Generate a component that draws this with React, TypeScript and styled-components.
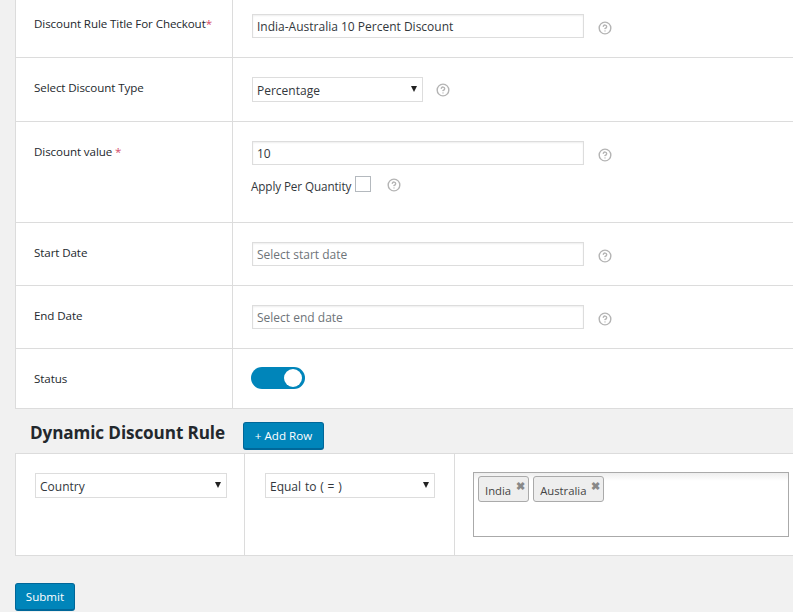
import React from "react";
import styled, { createGlobalStyle } from "styled-components";
import { CircleHelp } from "lucide-react";

const Global = createGlobalStyle`
  html, body { margin: 0; padding: 0; background: #f1f1f1; overflow: hidden; }
  body { font-family: "Open Sans", "Noto Sans", sans-serif; color: #32373c; -webkit-font-smoothing: antialiased; }
  * { box-sizing: border-box; }
`;
const Page = styled.div`
  width: 793px;
  height: 612px;
  padding-left: 15px;
  overflow: hidden;
`;
const Panel = styled.div`
  background: #fff;
  border-left: 1px solid #dcdcdc;
  border-bottom: 1px solid #dcdcdc;
  height: 409px;
`;
const Row = styled.div<{ $h: number; $last?: boolean }>`
  display: grid;
  grid-template-columns: 217px 1fr;
  height: ${(p) => p.$h}px;
  border-bottom: ${(p) => (p.$last ? "none" : "1px solid #dcdcdc")};
`;
const LabelCell = styled.div<{ $top: number }>`
  border-right: 1px solid #dcdcdc;
  padding: ${(p) => p.$top}px 0 0 18px;
  font-size: 11.6px;
  line-height: 16px;
  font-weight: 500;
  color: #23282d;
  letter-spacing: -0.1px;
  white-space: nowrap;
`;
const Req = styled.span`
  color: #d54e6b;
`;
const FieldCell = styled.div<{ $top: number }>`
  padding: ${(p) => p.$top}px 0 0 19px;
`;
const Line = styled.div`
  display: flex;
  align-items: center;
`;
const TextBox = styled.div<{ $ph?: boolean }>`
  width: 332px;
  height: 24px;
  border: 1px solid #ddd;
  box-shadow: inset 0 1px 2px rgba(0, 0, 0, 0.07);
  padding: 0 4px;
  font-size: 12px;
  line-height: 23px;
  color: ${(p) => (p.$ph ? "#6e7479" : "#32373c")};
  background: #fff;
`;
const Drop = styled.div<{ $w: number }>`
  width: ${(p) => p.$w}px;
  height: 25px;
  border: 1px solid #ddd;
  padding: 0 4px;
  font-size: 12px;
  line-height: 25px;
  word-spacing: 0.7px;
  color: #32373c;
  background: #fff;
  display: flex;
  justify-content: space-between;
`;
const Arrow = styled.span`
  width: 0;
  height: 0;
  margin: 8px 1px 0 0;
  border-left: 3.5px solid transparent;
  border-right: 3.5px solid transparent;
  border-top: 6px solid #222;
`;
const Help = styled(CircleHelp)<{ $ml: number; $mt: number }>`
  margin-left: ${(p) => p.$ml}px;
  margin-top: ${(p) => p.$mt}px;
  color: #b4b4b4;
  flex: none;
`;
const ApplyLine = styled.div`
  display: flex;
  align-items: flex-start;
  margin: 11px 0 0 -1px;
`;
const ApplyText = styled.span`
  font-size: 11.7px;
  line-height: 16px;
  margin-top: 2px;
  letter-spacing: -0.1px;
`;
const Check = styled.span`
  width: 16px;
  height: 16px;
  border: 1px solid #b4b9be;
  margin-left: 4px;
  background: #fff;
`;
const Toggle = styled.div`
  width: 54px;
  height: 22px;
  border-radius: 11px;
  background: #0085ba;
  margin-left: -1px;
  position: relative;
`;
const Knob = styled.span`
  position: absolute;
  right: 3px;
  top: 2px;
  width: 18px;
  height: 18px;
  border-radius: 50%;
  background: #fff;
`;
const HeadRow = styled.div`
  display: flex;
  align-items: flex-start;
  height: 44px;
  padding: 14px 0 0 15px;
`;
const Title = styled.h2`
  margin: 0;
  font-size: 17.1px;
  line-height: 20px;
  font-weight: 700;
  color: #23282d;
  width: 213px;
  letter-spacing: -0.1px;
  white-space: nowrap;
`;
const Btn = styled.button<{ $w: number; $mt?: number }>`
  width: ${(p) => p.$w}px;
  height: 28px;
  margin-top: ${(p) => p.$mt ?? 0}px;
  padding: 0;
  border: 1px solid #006799;
  border-bottom-width: 2px;
  border-radius: 3px;
  background: #0085ba;
  color: #fff;
  font-family: inherit;
  font-size: 11.6px;
  line-height: 24px;
`;
const RuleTable = styled.div`
  display: grid;
  grid-template-columns: 229px 210px 1fr;
  height: 103px;
  background: #fff;
  border: 1px solid #dcdcdc;
  border-right: none;
`;
const RuleCell = styled.div<{ $pl: number; $pt: number; $last?: boolean }>`
  padding: ${(p) => p.$pt}px 0 0 ${(p) => p.$pl}px;
  border-right: ${(p) => (p.$last ? "none" : "1px solid #dcdcdc")};
`;
const MultiBox = styled.div`
  width: 316px;
  height: 65px;
  border: 1px solid #aaa;
  background: linear-gradient(#eee, #fff 8px);
  padding: 3px 4px;
  display: flex;
  align-items: flex-start;
  gap: 4px;
`;
const Chip = styled.div`
  height: 26px;
  border: 1px solid #aaa;
  border-radius: 3px;
  background: #eee;
  padding: 0 3px 0 6px;
  display: flex;
  font-size: 11.3px;
  line-height: 27px;
  color: #444;
`;
const ChipX = styled.span`
  font-size: 11px;
  line-height: 18px;
  font-weight: 700;
  color: #888;
  margin-left: 5px;
`;
const Footer = styled.div`
  padding-top: 27px;
`;

export default function App() {
  return (
    <Page>
      <Global />
      <Panel>
        <Row $h={58}>
          <LabelCell $top={16}>Discount Rule Title For Checkout<Req>*</Req></LabelCell>
          <FieldCell $top={14}>
            <Line>
              <TextBox>India-Australia 10 Percent Discount</TextBox>
              <Help size={14} strokeWidth={2.4} $ml={14} $mt={4} />
            </Line>
          </FieldCell>
        </Row>
        <Row $h={64}>
          <LabelCell $top={22}>Select Discount Type</LabelCell>
          <FieldCell $top={19}>
            <Line>
              <Drop $w={171}>Percentage<Arrow /></Drop>
              <Help size={14} strokeWidth={2.4} $ml={13} $mt={0} />
            </Line>
          </FieldCell>
        </Row>
        <Row $h={101}>
          <LabelCell $top={22}>Discount value <Req>*</Req></LabelCell>
          <FieldCell $top={19}>
            <Line>
              <TextBox>10</TextBox>
              <Help size={14} strokeWidth={2.4} $ml={14} $mt={4} />
            </Line>
            <ApplyLine>
              <ApplyText>Apply Per Quantity</ApplyText>
              <Check />
              <Help size={14} strokeWidth={2.4} $ml={16} $mt={2} />
            </ApplyLine>
          </FieldCell>
        </Row>
        <Row $h={63}>
          <LabelCell $top={22}>Start Date</LabelCell>
          <FieldCell $top={19}>
            <Line>
              <TextBox $ph>Select start date</TextBox>
              <Help size={14} strokeWidth={2.4} $ml={14} $mt={4} />
            </Line>
          </FieldCell>
        </Row>
        <Row $h={63}>
          <LabelCell $top={22}>End Date</LabelCell>
          <FieldCell $top={19}>
            <Line>
              <TextBox $ph>Select end date</TextBox>
              <Help size={14} strokeWidth={2.4} $ml={14} $mt={4} />
            </Line>
          </FieldCell>
        </Row>
        <Row $h={59} $last>
          <LabelCell $top={22}>Status</LabelCell>
          <FieldCell $top={18}>
            <Toggle><Knob /></Toggle>
          </FieldCell>
        </Row>
      </Panel>
      <HeadRow>
        <Title>Dynamic Discount Rule</Title>
        <Btn $w={81} $mt={-1}>+ Add Row</Btn>
      </HeadRow>
      <RuleTable>
        <RuleCell $pl={19} $pt={19}>
          <Drop $w={192}>Country<Arrow /></Drop>
        </RuleCell>
        <RuleCell $pl={20} $pt={19}>
          <Drop $w={170}>Equal to ( = )<Arrow /></Drop>
        </RuleCell>
        <RuleCell $pl={18} $pt={18} $last>
          <MultiBox>
            <Chip>India<ChipX>✖</ChipX></Chip>
            <Chip>Australia<ChipX>✖</ChipX></Chip>
          </MultiBox>
        </RuleCell>
      </RuleTable>
      <Footer>
        <Btn $w={60}>Submit</Btn>
      </Footer>
    </Page>
  );
}
